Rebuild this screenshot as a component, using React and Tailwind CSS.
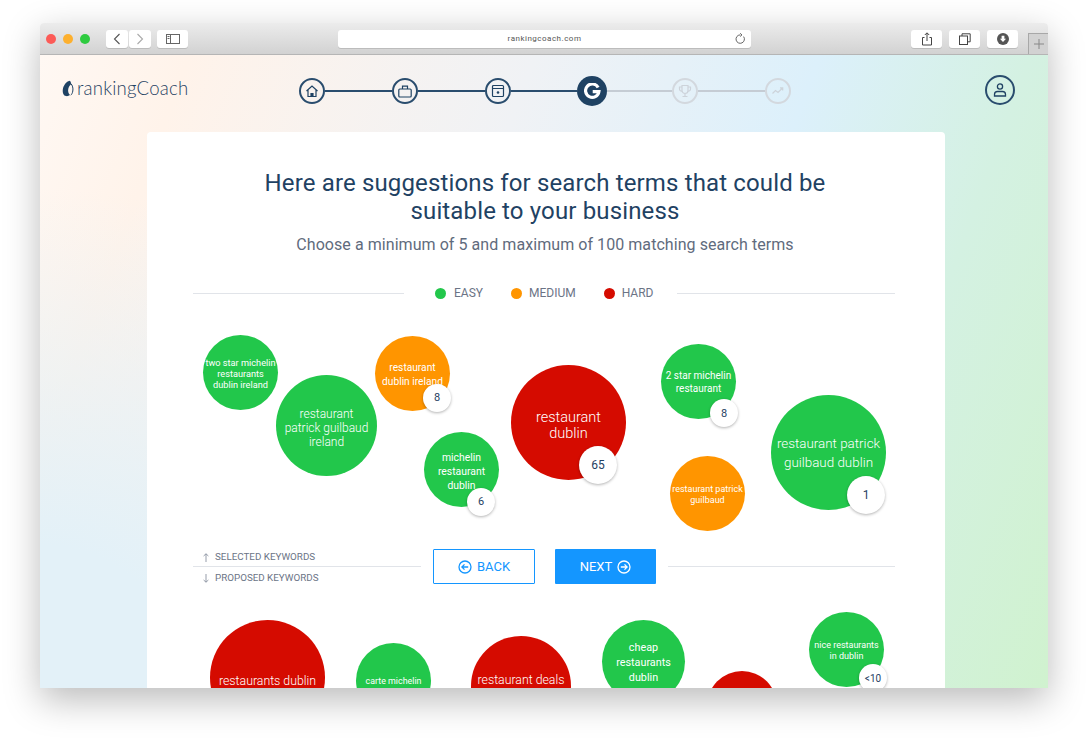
import React from 'react';

const GREEN = 'bg-[#22c74b]';
const ORANGE = 'bg-[#ff9500]';
const RED = 'bg-[#d50b00]';

const Bubble = ({ x, y, size, color, lines = [], fs, lh, badge, badgeSize = 28, badgeX, badgeY, badgeFs = 11, shift = 0 }) => (
    <div className={`absolute rounded-full flex flex-col items-center justify-center text-white text-center whitespace-nowrap ${fs > 11 ? 'font-light' : 'font-normal'} ${color}`}
        style={{ left: x, top: y, width: size, height: size, fontSize: fs, lineHeight: `${lh}px` }}>
        {lines.map(l => <span key={l} style={{ transform: `translateY(${shift}px)` }}>{l}</span>)}
        {badge && (
            <span className="absolute rounded-full bg-white text-[#1f4263] font-normal flex items-center justify-center shadow-[0_1px_3px_rgba(0,0,0,0.3)]"
                style={{ left: badgeX - badgeSize / 2, top: badgeY - badgeSize / 2, width: badgeSize, height: badgeSize, fontSize: badgeFs }}>
                {badge}
            </span>
        )}
    </div>
);

const ToolBtn = ({ className = '', children }) => (
    <div className={`h-[18px] bg-white rounded-[3px] flex items-center justify-center shadow-[0_1px_0_rgba(0,0,0,0.12)] ${className}`}>{children}</div>
);

const Step = ({ children, muted }) => (
    <div className={`w-[26px] h-[26px] shrink-0 rounded-full border-2 flex items-center justify-center ${muted ? 'border-[#d3d8de] text-[#cdd3da]' : 'border-[#2a4d6e] text-[#1f4263]'}`}>
        {children}
    </div>
);

const Line = ({ muted }) => <div className={`h-[2px] w-[67px] shrink-0 ${muted ? 'bg-[#c5ccd4]' : 'bg-[#2a4d6e]'}`} />;

const iconProps = { width: 16, height: 16, viewBox: '0 0 16 16', fill: 'none', stroke: 'currentColor', strokeWidth: 1.2 };

const CircleArrow = ({ dir }) => (
    <svg width="14" height="14" viewBox="0 0 14 14" fill="none" stroke="currentColor" strokeWidth="1.3">
        <circle cx="7" cy="7" r="6" />
        {dir === 'left' ? <path d="M10.2 7H4M6.5 4.4 3.9 7l2.6 2.6" /> : <path d="M3.8 7H10M7.5 4.4 10.1 7l-2.6 2.6" />}
    </svg>
);

const App = () => (
    <div className="w-[1087px] h-[745px] bg-white overflow-hidden pt-[23px] pl-[40px]" style={{ fontFamily: 'Roboto, sans-serif' }}>
        <div className="w-[1008px] h-[665px] flex flex-col overflow-hidden rounded-t-[4px] shadow-[0_12px_36px_rgba(0,0,0,0.27)]">
            {/* browser chrome */}
            <div className="relative h-[32px] shrink-0 flex items-center pl-[6px] bg-gradient-to-b from-[#ececec] to-[#d2d2d2] border-b border-[#b5b5b5]">
                <div className="flex gap-[7px]">
                    <span className="w-[10px] h-[10px] rounded-full bg-[#fc5b57]" />
                    <span className="w-[10px] h-[10px] rounded-full bg-[#fdb02e]" />
                    <span className="w-[10px] h-[10px] rounded-full bg-[#2ecb40]" />
                </div>
                <ToolBtn className="w-[22px] ml-[16px]">
                    <svg width="10" height="12" viewBox="0 0 10 12" fill="none" stroke="#555" strokeWidth="1.1"><path d="M7.5 1 2.5 6l5 5" /></svg>
                </ToolBtn>
                <ToolBtn className="w-[22px] ml-[1px]">
                    <svg width="10" height="12" viewBox="0 0 10 12" fill="none" stroke="#aaa" strokeWidth="1.1"><path d="M2.5 1l5 5-5 5" /></svg>
                </ToolBtn>
                <ToolBtn className="w-[31px] ml-[6px]">
                    <svg width="14" height="10" viewBox="0 0 14 10" fill="none" stroke="#666" strokeWidth="1"><rect x=".5" y=".5" width="13" height="9" /><path d="M4.5.5v9M1.5 2.5h2M1.5 4.5h2" /></svg>
                </ToolBtn>
                <ToolBtn className="w-[413px] ml-[150px] relative text-[8px] tracking-[0.5px] text-[#555]" >
                    rankingcoach.com
                    <svg className="absolute right-[5px] top-[3px]" width="12" height="12" viewBox="0 0 12 12" fill="none" stroke="#666" strokeWidth="1"><path d="M9.6 3.6A4.2 4.2 0 1 1 6 1.9M6 .3l2 1.6L6 3.5" /></svg>
                </ToolBtn>
                <ToolBtn className="w-[31px] ml-[160px]">
                    <svg width="12" height="14" viewBox="0 0 12 14" fill="none" stroke="#444" strokeWidth="1"><path d="M3.5 5.5h-2v7.5h9V5.5h-2M6 9V1M3.8 3 6 .8 8.2 3" /></svg>
                </ToolBtn>
                <ToolBtn className="w-[31px] ml-[7px]">
                    <svg width="12" height="12" viewBox="0 0 12 12" fill="none" stroke="#444" strokeWidth="1"><rect x=".5" y="3" width="8" height="8.5" /><path d="M3 3V.8h8.2v8H8.5" /></svg>
                </ToolBtn>
                <ToolBtn className="w-[31px] ml-[7px]">
                    <svg width="12" height="12" viewBox="0 0 12 12"><circle cx="6" cy="6" r="6" fill="#555" /><path d="M4.6 2.8h2.8v3h1.7L6 9 2.9 5.8h1.7z" fill="#fff" /></svg>
                </ToolBtn>
                <div className="absolute right-0 bottom-0 w-[20px] h-[21px] border-l border-t border-[#a8a8a8] bg-[#d2d2d2] flex items-center justify-center text-[#888]">
                    <svg width="10" height="10" viewBox="0 0 10 10" stroke="currentColor" strokeWidth="1"><path d="M5 0v10M0 5h10" /></svg>
                </div>
            </div>

            {/* page */}
            <div className="relative flex-1 flex flex-col overflow-hidden"
                style={{ background: 'radial-gradient(circle at 0% 100%, #e3f1f8 0, #e3f1f8 12%, rgba(227,241,248,0) 42%), linear-gradient(110deg, #fff8f3 0%, #fff3ea 12%, #f0f2f5 40%, #dcf0fb 63%, #d4f1e2 80%, #d0f2cf 100%)' }}>
                <div className="h-[77px] shrink-0 flex items-start pl-[22px] pr-[33px] pt-[21px]">
                    <div className="w-[237px] h-[24px] flex items-center gap-[3px] text-[#1f4263]">
                        <svg width="12" height="17" viewBox="0 0 12 17" className="mt-[1px]">
                            <path d="M7.500.8C4.500 1.500 1.300 5.500.8 9.500c-.4 3.400 .8 6.300 3.200 6.600 1.500 .2 3-.2 4-1-1.600-1.500-2.300-3.800-1.700-6.300 .4-1.800 1.400-3.300 2.600-4.300.4-1.500-.1-3.200-1.400-3.700z" fill="#1f4263" />
                            <path d="M8.800 3.500c1.700 1.700 2.500 4.800 2 7.500-.3 1.800-1 3.300-2 4.200" fill="none" stroke="#1f4263" strokeWidth="1" />
                        </svg>
                        <span className="text-[18.6px] font-light tracking-[0.2px] leading-[24px]" style={{ fontFamily: 'Lato, sans-serif' }}>rankingCoach</span>
                    </div>
                    <div className="h-[30px] flex items-center">
                        <Step>
                            <svg {...iconProps}><path d="M2.500 8 8 3l5.500 5M4 7v6.500h8V7" /><path d="M7 13.500V10.500h2v3" fill="currentColor" /></svg>
                        </Step>
                        <Line />
                        <Step>
                            <svg {...iconProps}><rect x="1.800" y="6" width="12.400" height="8" rx="1" /><path d="M5.500 6V3.200h5V6" /></svg>
                        </Step>
                        <Line />
                        <Step>
                            <svg {...iconProps}><rect x="2.500" y="2.500" width="11" height="11" rx="1" /><path d="M2.500 5.500h11" /><circle cx="8" cy="9.500" r="1.300" fill="currentColor" stroke="none" /></svg>
                        </Step>
                        <div className="h-[2px] w-[66px] shrink-0 bg-[#2a4d6e]" />
                        <div className="w-[30px] h-[30px] shrink-0 rounded-full bg-[#1f4263] flex items-center justify-center">
                            <svg width="17" height="17" viewBox="0 0 16 16" fill="none" stroke="#fff" strokeWidth="3"><path d="M13.300 4.200A6.300 6.300 0 1 0 14 8.200H8.200" /></svg>
                        </div>
                        <div className="h-[2px] w-[65px] shrink-0 bg-[#c5ccd4]" />
                        <Step muted>
                            <svg {...iconProps}><path d="M5 2.500h6v5a3 3 0 0 1-6 0zM5 4H2.500v2A2 2 0 0 0 5 8M11 4h2.500v2A2 2 0 0 1 11 8M8 10.500v2.500M5.500 13.500h5" /></svg>
                        </Step>
                        <Line muted />
                        <Step muted>
                            <svg {...iconProps}><path d="M2.500 10.500 5.500 7.500l2.500 2 4.500-4.500M10 4.800h2.700v2.700" /></svg>
                        </Step>
                    </div>
                    <div className="ml-auto w-[30px] h-[30px] -mt-[1px] rounded-full border-2 border-[#2a4d6e] text-[#1f4263] flex items-center justify-center">
                        <svg width="16" height="16" viewBox="0 0 16 16" fill="none" stroke="currentColor" strokeWidth="1.300"><circle cx="8" cy="4.500" r="2.600" /><path d="M2.500 14v-1.500c0-2 1.500-3 3-3h5c1.500 0 3 1 3 3V14z" /></svg>
                    </div>
                </div>

                {/* card */}
                <div className="ml-[107px] w-[798px] flex-1 bg-white rounded-t-[4px] pl-[46px] pr-[50px] pt-[37px] overflow-hidden">
                    <h1 className="w-[702px] ml-[1px] text-center text-[24px] leading-[28px] font-normal tracking-[0.14px] text-[#1f4263]">
                        Here are suggestions for search terms that could be<br />suitable to your business
                    </h1>
                    <p className="mt-[8px] pl-[2px] text-center text-[16px] leading-[24px] tracking-[0.06px] text-[#5f6b7d]">Choose a minimum of 5 and maximum of 100 matching search terms</p>

                    <div className="mt-[24px] h-[24px] flex items-center text-[12px] text-[#6b7486]">
                        <div className="w-[211px] h-px bg-[#e1e4e9]" />
                        <div className="flex items-center ml-[31px]">
                            <span className={`w-[11px] h-[11px] rounded-full ${GREEN}`} />
                            <span className="ml-[8px]">EASY</span>
                            <span className={`w-[11px] h-[11px] rounded-full ml-[28px] ${ORANGE}`} />
                            <span className="ml-[7px]">MEDIUM</span>
                            <span className={`w-[11px] h-[11px] rounded-full ml-[28px] ${RED}`} />
                            <span className="ml-[7px]">HARD</span>
                        </div>
                        <div className="flex-1 ml-[24px] h-px bg-[#e1e4e9]" />
                    </div>

                    {/* selected keywords */}
                    <div className="relative h-[244px]">
                        <Bubble x={10} y={30} size={75} color={GREEN} fs={9.2} lh={11} shift={1} lines={['two star michelin', 'restaurants', 'dublin ireland']} />
                        <Bubble x={83} y={70} size={101} color={GREEN} fs={12} lh={14} shift={2} lines={['restaurant', 'patrick guilbaud', 'ireland']} />
                        <Bubble x={182} y={31} size={75} color={ORANGE} fs={10.2} lh={14} shift={1} lines={['restaurant', 'dublin ireland']} badge="8" badgeX={62} badgeY={62} />
                        <Bubble x={318} y={60} size={115} color={RED} fs={14.5} lh={16} shift={3} lines={['restaurant', 'dublin']} badge="65" badgeSize={38} badgeX={87} badgeY={100} badgeFs={12} />
                        <Bubble x={231} y={127} size={75} color={GREEN} fs={10.4} lh={14} shift={2} lines={['michelin', 'restaurant', 'dublin']} badge="6" badgeX={57} badgeY={70} />
                        <Bubble x={468} y={39} size={75} color={GREEN} fs={10} lh={13} lines={['2 star michelin', 'restaurant']} badge="8" badgeX={63} badgeY={69} />
                        <Bubble x={578} y={90} size={115} color={GREEN} fs={13.4} lh={18.5} shift={1} lines={['restaurant patrick', 'guilbaud dublin']} badge="1" badgeSize={38} badgeX={95} badgeY={100} badgeFs={12} />
                        <Bubble x={477} y={151} size={75} color={ORANGE} fs={9} lh={11} shift={1} lines={['restaurant patrick', 'guilbaud']} />
                    </div>

                    {/* divider with buttons */}
                    <div className="h-[35px] flex items-center">
                        <div className="w-[228px] h-[35px] flex flex-col text-[9.8px] text-[#6b7486]">
                            <div className="flex items-center pl-[10px] h-[18px] border-b border-[#e1e4e9]">
                                <svg className="mr-[6px]" width="6" height="9" viewBox="0 0 6 9" fill="none" stroke="#8a92a0" strokeWidth=".9"><path d="M3 9V.8M.6 3 3 .8 5.400 3" /></svg>
                                SELECTED KEYWORDS
                            </div>
                            <div className="flex items-center pl-[10px] h-[17px] pt-[5px]">
                                <svg className="mr-[6px]" width="6" height="9" viewBox="0 0 6 9" fill="none" stroke="#8a92a0" strokeWidth=".9"><path d="M3 0v8.200M.6 6 3 8.200 5.400 6" /></svg>
                                PROPOSED KEYWORDS
                            </div>
                        </div>
                        <button className="ml-[12px] w-[102px] h-[35px] border border-[#1496ff] bg-white text-[#1496ff] text-[13px] flex items-center justify-center gap-[5px] rounded-[1px]">
                            <CircleArrow dir="left" /> BACK
                        </button>
                        <button className="ml-[20px] w-[101px] h-[35px] bg-[#1496ff] text-white text-[13px] flex items-center justify-center gap-[5px] rounded-[1px]">
                            NEXT <CircleArrow dir="right" />
                        </button>
                        <div className="flex-1 ml-[12px] h-px bg-[#e1e4e9]" />
                    </div>

                    {/* proposed keywords */}
                    <div className="relative h-[200px]">
                        <Bubble x={17} y={36} size={115} color={RED} fs={12.3} lh={14} shift={3} lines={['restaurants dublin']} />
                        <Bubble x={163} y={59} size={75} color={GREEN} fs={8.9} lh={12} lines={['carte michelin']} />
                        <Bubble x={278} y={52} size={100} color={RED} fs={12.3} lh={14} shift={-6} lines={['restaurant deals']} />
                        <Bubble x={409} y={36} size={83} color={GREEN} fs={10.8} lh={15} shift={1} lines={['cheap', 'restaurants', 'dublin']} />
                        <Bubble x={514} y={87} size={70} color={RED} lines={[]} />
                        <Bubble x={616} y={28} size={75} color={GREEN} fs={9} lh={11} shift={1} lines={['nice restaurants', 'in dublin']} badge="<10" badgeX={64} badgeY={66} badgeFs={10} />
                    </div>
                </div>
            </div>
        </div>
    </div>
);

export default App;
